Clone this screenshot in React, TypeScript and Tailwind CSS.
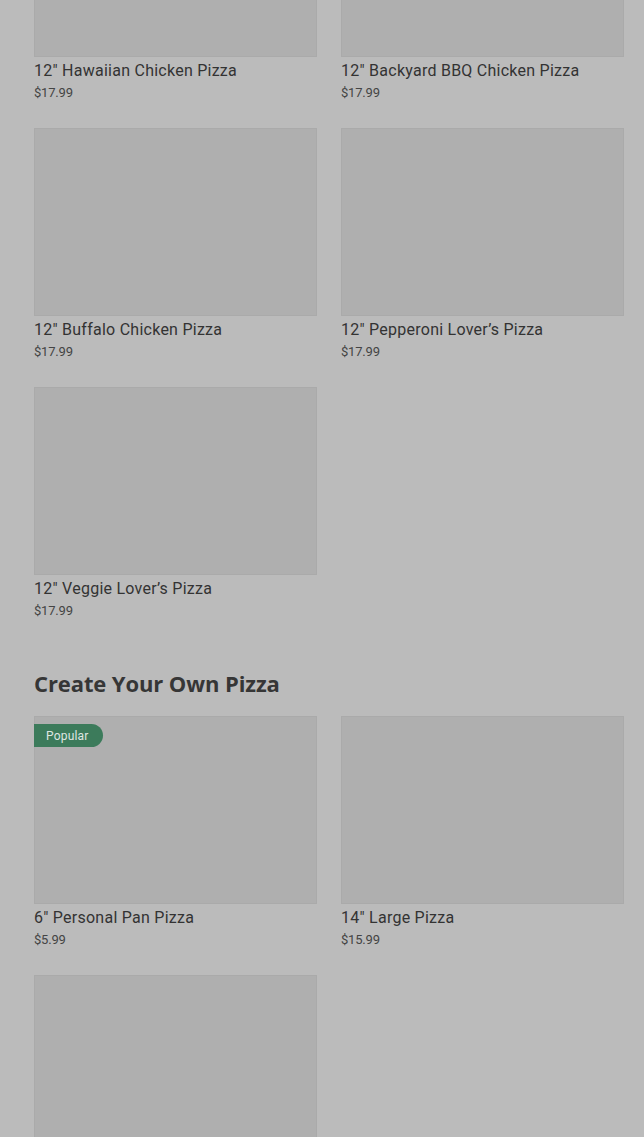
type Pizza = {
  name: string;
  price: string;
  badge?: string;
};

const specialty: Pizza[] = [
  { name: '12" Hawaiian Chicken Pizza', price: '$17.99' },
  { name: '12" Backyard BBQ Chicken Pizza', price: '$17.99' },
  { name: '12" Buffalo Chicken Pizza', price: '$17.99' },
  { name: '12" Pepperoni Lover\u2019s Pizza', price: '$17.99' },
  { name: '12" Veggie Lover\u2019s Pizza', price: '$17.99' },
];

const createYourOwn: Pizza[] = [
  { name: '6" Personal Pan Pizza', price: '$5.99', badge: 'Popular' },
  { name: '14" Large Pizza', price: '$15.99' },
  { name: '', price: '' },
];

function PizzaCard({ pizza }: { pizza: Pizza }) {
  return (
    <div className="flex flex-col">
      <div className="relative h-[188px] w-full border border-[#aaaaaa] bg-[#afafaf]">
        {pizza.badge && (
          <span className="absolute left-[-1px] top-[7px] flex h-[23px] items-center rounded-r-full bg-[#3c7b5b] pl-3 pr-[14px] text-[12px] tracking-[0.2px] text-[#dfe6e2]">
            {pizza.badge}
          </span>
        )}
      </div>
      {pizza.name && (
        <>
          <p className="mt-[2px] text-[16px] leading-6 tracking-[0.25px] text-[#333333]">{pizza.name}</p>
          <p className="text-[13px] leading-5 tracking-[-0.2px] text-[#444444]">{pizza.price}</p>
        </>
      )}
    </div>
  );
}

export default function App() {
  return (
    <div
      className="h-[1137px] overflow-hidden bg-[#bbbbbb] pl-[34px] pr-[20px]"
      style={{ fontFamily: 'Roboto, "Noto Sans", sans-serif' }}
    >
      <div className="-mt-[131px] grid grid-cols-2 gap-x-6 gap-y-[25px]">
        {specialty.map((p) => (
          <PizzaCard key={p.name} pizza={p} />
        ))}
      </div>

      <h2
        className="mb-[18px] mt-[47px] text-[22px] font-bold leading-[30px] tracking-[-0.1px] text-[#363636]"
        style={{ fontFamily: '"Open Sans", "Noto Sans", sans-serif' }}
      >
        Create Your Own Pizza
      </h2>

      <div className="grid grid-cols-2 gap-x-6 gap-y-[25px]">
        {createYourOwn.map((p, i) => (
          <PizzaCard key={i} pizza={p} />
        ))}
      </div>
    </div>
  );
}
